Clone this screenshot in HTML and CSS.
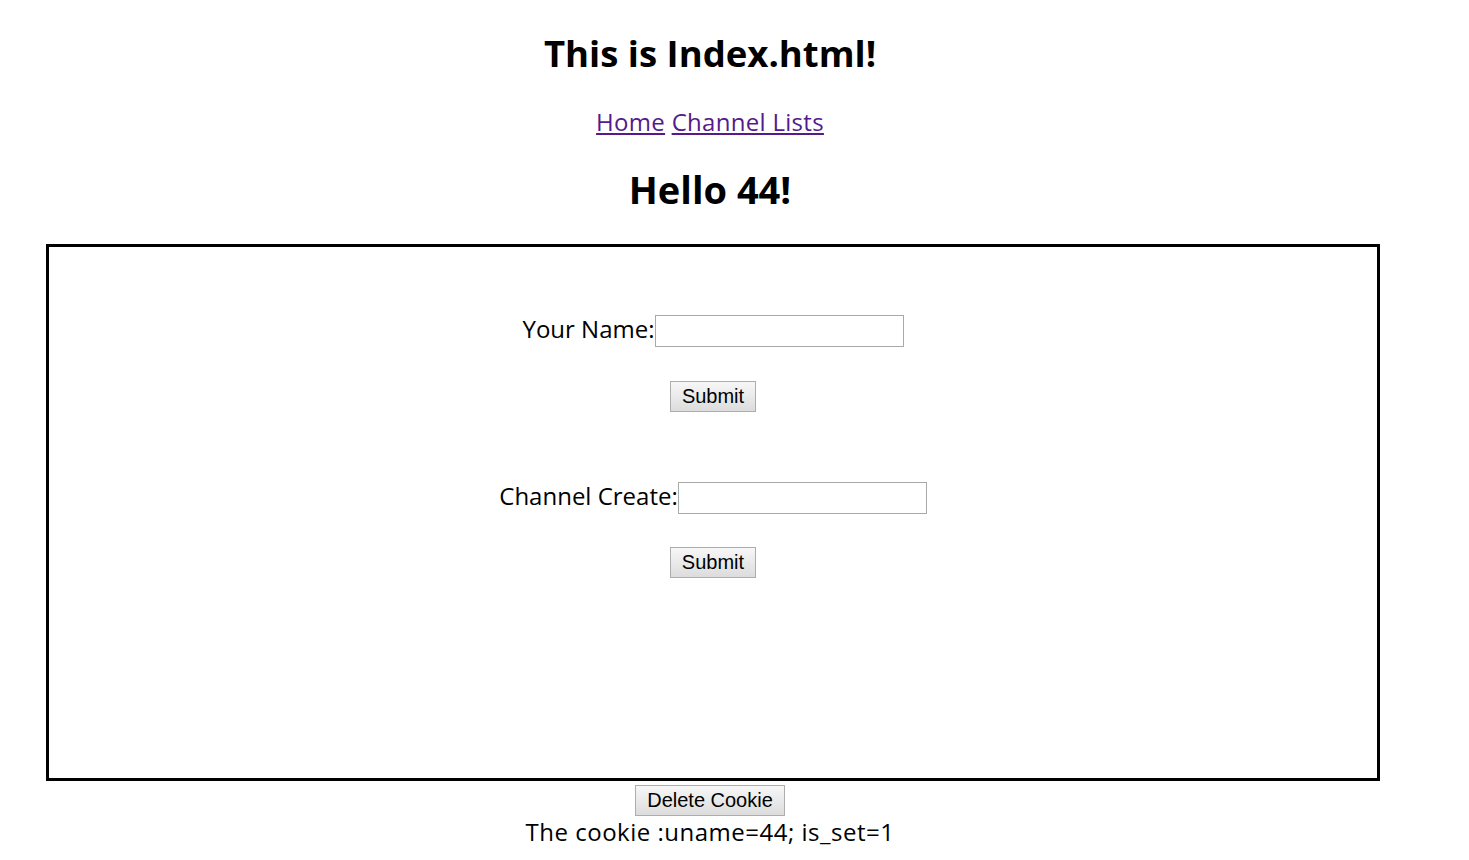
FILE: index.html
```html
<!DOCTYPE html>
<html>
<head>
<meta charset="utf-8">
<title>Index</title>
<link rel="stylesheet" href="styles.css">
</head>
<body>
<div class="page">
  <h1 class="title">This is Index.html!</h1>
  <nav class="nav"><a href="#" class="link">Home</a> <a href="#" class="link">Channel Lists</a></nav>
  <h2 class="hello">Hello 44!</h2>
  <div class="box">
    <form class="form form-name">
      <div class="row">
        <label class="label">Your Name:</label><input class="field" type="text">
      </div>
      <button class="btn" type="button">Submit</button>
    </form>
    <form class="form form-channel">
      <div class="row">
        <label class="label">Channel Create:</label><input class="field" type="text">
      </div>
      <button class="btn" type="button">Submit</button>
    </form>
  </div>
  <div class="footer">
    <button class="btn" type="button">Delete Cookie</button>
    <div class="cookie">The cookie :uname=44; is_set=1</div>
  </div>
</div>
</body>
</html>
```

FILE: styles.css
```css
html, body {
  background: #ffffff;
}
body {
  margin: 0;
  padding: 0 8px;
  font-family: "Open Sans", "Noto Sans", sans-serif;
  font-size: 24px;
  line-height: 30px;
  color: #000000;
}
.page {
  width: 1404px;
  display: flex;
  flex-direction: column;
  align-items: center;
}
.title {
  margin: 31px 0 0 0;
  font-size: 36.5px;
  line-height: 44px;
  font-weight: 700;
}
.nav {
  margin-top: 32px;
  line-height: 30px;
  letter-spacing: 0.3px;
}
.link {
  color: #551a8b;
  text-decoration: underline;
}
.hello {
  margin: 30px 0 0 0;
  font-size: 38px;
  line-height: 44px;
  font-weight: 700;
}
.box {
  box-sizing: border-box;
  align-self: flex-start;
  margin: 33px 0 0 38px;
  width: 1334px;
  height: 537px;
  border: 3px solid #000000;
  display: flex;
  flex-direction: column;
  align-items: center;
  padding-top: 67px;
}
.form {
  display: flex;
  flex-direction: column;
  align-items: center;
}
.form-channel {
  margin-top: 69px;
}
.row {
  display: flex;
  align-items: flex-end;
}
.label {
  margin-bottom: 3px;
  line-height: 30px;
}
.field {
  box-sizing: border-box;
  width: 249px;
  height: 32px;
  margin: 0;
  border: 1px solid #a9a9a9;
  padding: 2px 4px;
  font-size: 20px;
  background: #ffffff;
}
.form .btn {
  margin-top: 34px;
}
.form-channel .btn {
  margin-top: 33px;
}
.btn {
  box-sizing: border-box;
  height: 31px;
  margin: 0;
  padding: 0 11px;
  border: 1px solid #adadad;
  border-radius: 0;
  background: linear-gradient(#f7f7f7, #dcdcdc);
  font-family: "Liberation Sans", Arial, sans-serif;
  font-size: 20px;
  line-height: 29px;
  color: #000000;
}
.footer {
  margin-top: 4px;
  display: flex;
  flex-direction: column;
  align-items: center;
}
.cookie {
  margin-top: 1px;
  line-height: 30px;
  letter-spacing: 0.5px;
}
```
